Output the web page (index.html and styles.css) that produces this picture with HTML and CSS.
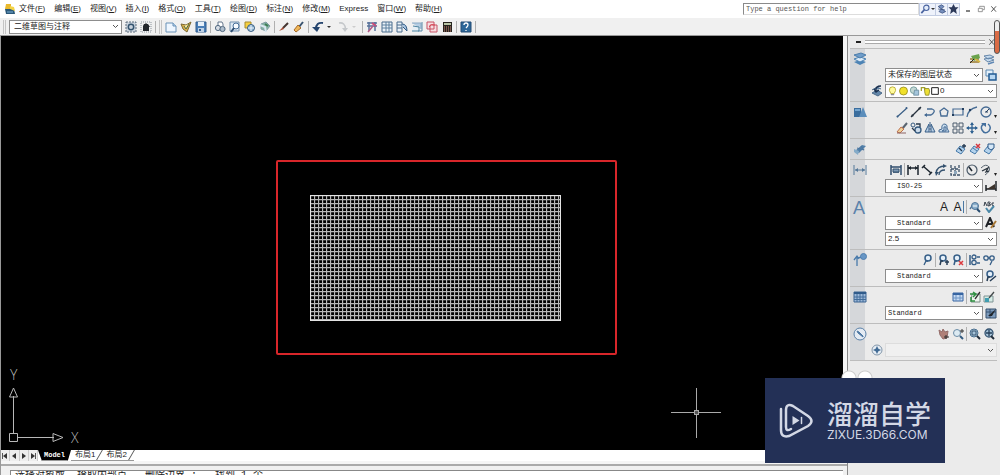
FILE: index.html
```html
<!DOCTYPE html>
<html lang="zh-CN">
<head>
<meta charset="utf-8">
<title>CAD</title>
<link rel="stylesheet" href="styles.css">
</head>
<body>
<svg class="defs" aria-hidden="true">
  <symbol id="app" viewBox="0 0 12 12"><path d="M2 1h5v5H1z" fill="#e9b92c"/><path d="M1 6h9l1 5H2z" fill="#2b5878"/><path d="M6 3l4 1 1 4-5-2z" fill="#f4d447"/><path d="M3 9h6" stroke="#7db0d8"/></symbol>
  <symbol id="gear" viewBox="0 0 12 12"><rect x="1" y="1" width="10" height="10" fill="#c9d2dc" stroke="#5c6c7c" stroke-dasharray="2 1"/><circle cx="6" cy="6" r="2.7" fill="none" stroke="#34546f" stroke-width="1.5"/></symbol>
  <symbol id="home" viewBox="0 0 12 12"><rect x="1" y="1" width="10" height="10" fill="none" stroke="#8b949c" stroke-dasharray="1 1"/><path d="M3 5l1-2h1l1-1 1 1h1l2 3H9v4H3z" fill="#22262b"/></symbol>
  <symbol id="new" viewBox="0 0 12 12"><path d="M1 2h7l3 3v6H1z" fill="#eef6ff" stroke="#6991b7"/><path d="M8 2v3h3" fill="#b8d3ec" stroke="#6991b7"/></symbol>
  <symbol id="open" viewBox="0 0 12 12"><path d="M1 3l5 1 5-3-2 5-2 5-4-3z" fill="#d9b04a" stroke="#7c6a34"/><path d="M4 5l2 3 3-5" fill="#f8e69b" stroke="#4d6a44"/></symbol>
  <symbol id="save" viewBox="0 0 12 12"><path d="M1 1h10v10H1z" fill="#4a7fb8" stroke="#315c8d"/><path d="M3 1h6v4H3z" fill="#e6f0fa"/><path d="M3 7h6v4H3z" fill="#bed1e6"/><path d="M4 8h2v2H4z" fill="#315c8d"/></symbol>
  <symbol id="print" viewBox="0 0 12 12"><path d="M4 5V1h4l1 2v2" fill="#fff" stroke="#64778c"/><circle cx="4" cy="7" r="2.6" fill="#d7dde5" stroke="#51687f"/><circle cx="8.500" cy="8" r="2.600" fill="#aebdcc" stroke="#51687f"/></symbol>
  <symbol id="preview" viewBox="0 0 12 12"><path d="M1 1h9v9H1z" fill="#dfeaf5" stroke="#7291af"/><circle cx="7" cy="5" r="3" fill="#f7fbff" stroke="#476f99"/><path d="M5 7l-3 4" stroke="#2d4d70" stroke-width="2"/></symbol>
  <symbol id="publish" viewBox="0 0 12 12"><path d="M1 1h6v6H1z" fill="#f6cf3e" stroke="#a48a31"/><circle cx="7" cy="7" r="3.500" fill="#8bb0cf" stroke="#3e6283"/><path d="M4 7h6M7 4v6" stroke="#eaf4fc"/></symbol>
  <symbol id="globe" viewBox="0 0 12 12"><path d="M2 3l5-2 4 4-4 5-5-2z" fill="#86b3a4" stroke="#7f9ba3"/><path d="M1 4l5 2 1 5" fill="none" stroke="#d9e7f0" stroke-width="2"/><path d="M6 3l3 2" stroke="#3d7c54" stroke-width="2"/></symbol>
  <symbol id="brush" viewBox="0 0 12 12"><path d="M10 2L5 7" stroke="#443530" stroke-width="2"/><path d="M5 6L1 10l5-2z" fill="#a4472e"/></symbol>
  <symbol id="match" viewBox="0 0 12 12"><path d="M10 1L6 6" stroke="#36506c" stroke-width="2"/><path d="M5 4l3 3-5 4-2-2z" fill="#eeb75a" stroke="#a66a28"/></symbol>
  <symbol id="undo" viewBox="0 0 12 12"><path d="M11 2Q4 1 4 8" fill="none" stroke="#24446e" stroke-width="2"/><path d="M0 6h8l-3 5z" fill="#24446e"/></symbol>
  <symbol id="redo" viewBox="0 0 12 12"><path d="M2 2q6-1 6.500 6" fill="none" stroke="#c5c8cb" stroke-width="1.500"/><path d="M5 7h6l-3 4z" fill="#c5c8cb"/></symbol>
  <symbol id="props" viewBox="0 0 12 12"><path d="M1 2h10M1 5h10M3 1v9M9 1v9" stroke="#58719a" stroke-width="1.500"/><path d="M6 2l4 3" stroke="#cc4d78" stroke-width="2"/><path d="M2 11l5-6" stroke="#b75a85" stroke-width="1.500"/></symbol>
  <symbol id="sheet" viewBox="0 0 12 12"><path d="M1 1h10v10H1z" fill="#e9f1f8" stroke="#486b8c"/><path d="M5 1v10M8 1v10M1 4h10M1 7h10" stroke="#5d809f"/></symbol>
  <symbol id="palette" viewBox="0 0 12 12"><path d="M1 1h5v10H1z" fill="#e9f1f8" stroke="#486b8c"/><path d="M1 4h5M1 7h5" stroke="#486b8c"/><path d="M6 3q5 0 5 7l-4-4" fill="#a9c5e0" stroke="#2f5984"/></symbol>
  <symbol id="stack" viewBox="0 0 12 12"><path d="M1 2h9v6" fill="#b4cde3" stroke="#8ba9c4"/><path d="M2 5l6 1v4H1" fill="#e6eff6" stroke="#4b83a0"/><path d="M11 1v9H7" fill="none" stroke="#5688a9"/></symbol>
  <symbol id="markup" viewBox="0 0 12 12"><path d="M1 1h7v7H1zM4 4h7v7H4z" fill="#f7dce0" stroke="#c65365"/><path d="M3 6q2-4 6-2" fill="none" stroke="#db4a58"/></symbol>
  <symbol id="calc" viewBox="0 0 12 12"><path d="M2 1h9v10H2z" fill="#26241f"/><path d="M3 2h7v2H3z" fill="#b9c5a6"/><path d="M3 6h7M3 8h7M3 10h7" stroke="#d0887a" stroke-dasharray="1 1"/></symbol>
  <symbol id="help" viewBox="0 0 12 12"><path d="M1 1h10v10H1z" fill="#2d6798" stroke="#244d74"/><path d="M4 4q0-2 2-2t2 2q0 1-2 3M6 9v1" fill="none" stroke="#fff" stroke-width="1.300"/></symbol>
  <symbol id="find" viewBox="0 0 12 12"><circle cx="7" cy="4.500" r="3.200" fill="#e3ecfa" stroke="#4a64a0" stroke-width="1.300"/><path d="M4.500 7L1 11" stroke="#4a64a0" stroke-width="2"/></symbol>
  <symbol id="comm" viewBox="0 0 12 12"><path d="M2 3l4-2 3 2-3 3zM3 9l3-3 5 3-4 2z" fill="#7891bf" stroke="#3e5482"/><path d="M2 6l8 1" stroke="#3e5482"/></symbol>
  <symbol id="star" viewBox="0 0 12 12"><path d="M6 0l2 4h4L9 7l1 5-4-3-4 3 1-5-3-3h4z" fill="#2d3a5a"/></symbol>
  <symbol id="min" viewBox="0 0 12 12"><path d="M3 9h6" stroke="#444" stroke-width="2"/></symbol>
  <symbol id="restore" viewBox="0 0 12 12"><path d="M4 4V2h7v5H9M2 5h6v5H2z" fill="none" stroke="#666"/></symbol>
  <symbol id="close" viewBox="0 0 12 12"><path d="M2 2l7 8M9 2l-7 8" stroke="#555" stroke-width="1.500"/></symbol>
  <symbol id="layers" viewBox="0 0 14 14"><path d="M1 10l6 3 6-3-6-2z" fill="#4c83b5"/><path d="M1 7l6 3 6-3-6-2z" fill="#dcebf7" stroke="#4c83b5"/><path d="M1 3l6 3 6-3-5-2z" fill="#6f9dca" stroke="#4c7dac"/></symbol>
  <symbol id="layerp" viewBox="0 0 12 12"><path d="M1 9h9M1 6h9" stroke="#9a7b31" stroke-width="1.500"/><path d="M2 3l8-2 1 4-6 3z" fill="#6aa34d"/><path d="M1 10l4-4" stroke="#222"/><path d="M6 6l5 3" stroke="#d3b441" stroke-width="2"/></symbol>
  <symbol id="layers2" viewBox="0 0 12 12"><path d="M1 3l6-1 4 2-6 2zM1 6l6-1 4 2-6 2z" fill="#c7dbee" stroke="#6687aa"/><path d="M5 11l6-2" stroke="#5f88b5" stroke-width="1.500"/></symbol>
  <symbol id="copyw" viewBox="0 0 12 12"><path d="M1 1h7v6H1z" fill="#e4f0fa" stroke="#5b87af"/><path d="M4 5h7v6H4z" fill="#b7d7f2" stroke="#225b92" stroke-width="1.500"/></symbol>
  <symbol id="laycur" viewBox="0 0 12 12"><path d="M1 8l5-3 5 3-4 3zM1 5l5-3 4 2" fill="#6387aa" stroke="#4d6c8b"/><path d="M10 1q-6 0-5 5M3 4l2 3 3-2" fill="none" stroke="#182d4c" stroke-width="1.300"/></symbol>
  <symbol id="bulb" viewBox="0 0 12 12"><path d="M4 9Q1 5 3 2q3-2 6 0 2 3-1 7z" fill="#fffb9c" stroke="#b5a62e"/><path d="M4 10h4v1H4z" fill="#556"/></symbol>
  <symbol id="sun" viewBox="0 0 12 12"><circle cx="6" cy="6" r="4.800" fill="#f0e02a" stroke="#998d1e"/></symbol>
  <symbol id="freeze" viewBox="0 0 12 12"><circle cx="5" cy="5" r="4" fill="#c4d8d4" stroke="#6e9796"/><path d="M6 5h5v6H5z" fill="#a5c5db" stroke="#698c9f"/></symbol>
  <symbol id="lock" viewBox="0 0 12 12"><path d="M1 6V2h4v3" fill="none" stroke="#a0a12e" stroke-width="1.500"/><path d="M5 3h5l1 3-1 5H6L5 7z" fill="#eee034" stroke="#8e8b26"/></symbol>
  <symbol id="swatch" viewBox="0 0 12 12"><path d="M1 1h10v10H1z" fill="#fff" stroke="#222" stroke-width="1.500"/></symbol>
  <symbol id="shapes" viewBox="0 0 14 14"><path d="M1 3h7v9H1z" fill="#3a6d9e"/><path d="M6 12l4-10 4 10z" fill="#5b8dbb"/><path d="M2 4h5v2H2z" fill="#73a5d0"/></symbol>
  <symbol id="line" viewBox="0 0 12 12"><path d="M1 11l10-9" stroke="#385d85" stroke-width="1.200"/><circle cx="1.500" cy="10.500" r="1" fill="#385d85"/><circle cx="10.500" cy="2" r="1" fill="#385d85"/></symbol>
  <symbol id="xline" viewBox="0 0 12 12"><path d="M1 11l10-10" stroke="#26313d" stroke-width="1.200"/><path d="M8 2l3-1-1 3zM1 11l1-3 2 2z" fill="#26313d"/></symbol>
  <symbol id="pline" viewBox="0 0 12 12"><path d="M3 3h5q3 1 2 3T7 9H1" fill="none" stroke="#466b94" stroke-width="1.300"/><path d="M3 7L0 9l3 2" fill="#466b94"/></symbol>
  <symbol id="poly" viewBox="0 0 12 12"><path d="M6 2l4 3-1 5H3L2 5z" fill="none" stroke="#466b94" stroke-width="1.300"/></symbol>
  <symbol id="rect" viewBox="0 0 12 12"><path d="M1 3h10v6H1z" fill="none" stroke="#466b94" stroke-width="1.200"/><path d="M0 8h2v2H0zM10 2h2v2h-2z" fill="#233e5e"/></symbol>
  <symbol id="arc" viewBox="0 0 12 12"><path d="M1 11Q2 3 11 1" fill="none" stroke="#466b94" stroke-width="1.300"/><circle cx="4" cy="4" r="1.200" fill="#233e5e"/></symbol>
  <symbol id="circle" viewBox="0 0 12 12"><circle cx="6" cy="6" r="5" fill="none" stroke="#466b94" stroke-width="1.300"/><path d="M6 6l3-3M5 6h3" stroke="#233e5e"/></symbol>
  <symbol id="erase" viewBox="0 0 12 12"><path d="M11 1L6 7" stroke="#596470" stroke-width="2"/><path d="M5 5l3 2-4 4-3-1z" fill="#eed198" stroke="#be704e"/><path d="M1 11h9" stroke="#8f6464"/></symbol>
  <symbol id="copy" viewBox="0 0 12 12"><circle cx="3" cy="3" r="2" fill="none" stroke="#34597f"/><circle cx="8" cy="8" r="3" fill="#cddceb" stroke="#34597f" stroke-width="1.300"/><path d="M6 2h4v3M2 6l3 3" fill="none" stroke="#27384c" stroke-width="1.300"/></symbol>
  <symbol id="mirror" viewBox="0 0 12 12"><path d="M5 2v8H1zM7 2v8h4z" fill="#b9cfe5" stroke="#385f88"/><path d="M6 0v12" stroke="#385f88" stroke-dasharray="2 1"/></symbol>
  <symbol id="offset" viewBox="0 0 12 12"><path d="M1 10V8l3-1q-1-5 3-5 3 1 2 4l2 4zM4 9l2-1V5q2-1 2 1v3z" fill="#c8dced" stroke="#466b94"/></symbol>
  <symbol id="array" viewBox="0 0 12 12"><path d="M1 1h4v4H1zM7 1h4v4H7zM1 7h4v4H1zM7 7h4v4H7z" fill="none" stroke="#4a5b6d"/></symbol>
  <symbol id="move" viewBox="0 0 12 12"><path d="M6 1v10M1 6h10" stroke="#2f6191" stroke-width="1.300"/><path d="M4 3l2-3 2 3zM4 9l2 3 2-3zM3 4L0 6l3 2zM9 4l3 2-3 2z" fill="#2f6191"/></symbol>
  <symbol id="rotate" viewBox="0 0 12 12"><path d="M4 2Q0 4 2 8q3 5 7 1 3-4-1-7" fill="none" stroke="#446f9d" stroke-width="1.500"/><path d="M1 1h5v4z" fill="#446f9d"/></symbol>
  <symbol id="block" viewBox="0 0 14 14"><path d="M2 9l7-6 4 1-7 7z" fill="#517fa9"/><path d="M1 7l5 2-1 4-4-3z" fill="#85abc8"/><path d="M4 6l7 2M8 4l3 4" stroke="#4a759f"/></symbol>
  <symbol id="b1" viewBox="0 0 12 12"><path d="M1 8l4-5 5 3-4 5z" fill="#b4d3ed" stroke="#4679a9"/><path d="M4 5l3 3M9 1v4M7 3h4" stroke="#203750" stroke-width="1.300"/></symbol>
  <symbol id="b2" viewBox="0 0 12 12"><path d="M1 8l4-5 5 3-4 5z" fill="#b4d3ed" stroke="#4679a9"/><path d="M4 5l4 3" stroke="#4679a9"/><path d="M7 1l4 4M11 1L7 5" stroke="#d33842" stroke-width="1.500"/></symbol>
  <symbol id="b3" viewBox="0 0 12 12"><path d="M1 8l4-5 5 3-4 5z" fill="#b4d3ed" stroke="#4679a9"/><path d="M5 1h6v4l-3 2-3-2z" fill="#d4e7f7" stroke="#2d5887"/></symbol>
  <symbol id="dim" viewBox="0 0 14 14"><path d="M1 2v10M13 2v10M2 7h10" stroke="#557899"/><path d="M2 7l3-2v4zM12 7L9 5v4z" fill="#557899"/></symbol>
  <symbol id="d1" viewBox="0 0 12 12"><path d="M1 1v10M11 1v10M1 3h10M3 8h6" stroke="#314e6d" stroke-width="1.500"/><path d="M3 5h6v3H3z" fill="#7d99b4" stroke="#314e6d"/></symbol>
  <symbol id="d2" viewBox="0 0 12 12"><path d="M1 1v10M11 1v10M1 4h10" stroke="#1e2730" stroke-width="1.500"/><path d="M1 4l3-2v4zM11 4L8 2v4z" fill="#1e2730"/></symbol>
  <symbol id="d3" viewBox="0 0 12 12"><path d="M2 2l8 7M1 4l3-3M8 11l3-3" stroke="#1e2730" stroke-width="1.500"/></symbol>
  <symbol id="d4" viewBox="0 0 12 12"><path d="M1 9Q2 2 10 2M4 11q0-5 6-5" fill="none" stroke="#34516e" stroke-width="1.300"/><path d="M8 0l4 2-4 2zM0 8h4l-3 4z" fill="#34516e"/></symbol>
  <symbol id="d5" viewBox="0 0 12 12"><path d="M2 1v10h9M6 2v8M10 1v7M2 5h8" fill="none" stroke="#3c5269" stroke-dasharray="3 1" stroke-width="1.300"/><path d="M5 7h3v3H5z" fill="#8fa8bd"/></symbol>
  <symbol id="d6" viewBox="0 0 12 12"><circle cx="6" cy="6" r="5" fill="none" stroke="#4a5968" stroke-width="1.200"/><path d="M6 7L3 3" stroke="#1e2730" stroke-width="1.500"/></symbol>
  <symbol id="d7" viewBox="0 0 12 12"><path d="M1 4q5-5 8-1 2 4-4 8" fill="none" stroke="#56636f"/><path d="M2 7l6-3-2 4 3-1" fill="none" stroke="#29333d" stroke-width="1.300"/></symbol>
  <symbol id="dstyle" viewBox="0 0 12 12"><path d="M1 5v6M11 1v10M1 9h10" stroke="#202428" stroke-width="1.500"/><path d="M2 9l8-5v5z" fill="#3c332c"/></symbol>
  <symbol id="ta" viewBox="0 0 12 12"><path d="M1 8q5-8 8 0" fill="none" stroke="#4f7498" stroke-width="1.500"/><circle cx="6" cy="5" r="3.500" fill="#8bafcc" stroke="#4f7498"/><path d="M8 8l3 3" stroke="#284c6f" stroke-width="2"/><path d="M4 5h4" stroke="#fff"/></symbol>
  <symbol id="abc" viewBox="0 0 12 12"><path d="M1 5l1-4 2 4M5 1v4M5 1q4 0 1 2 4 1-1 2M11 2q-3-1-2 2l2 1" fill="none" stroke="#333d48"/><path d="M3 7l3 4 5-6" fill="none" stroke="#4b88a7" stroke-width="2"/></symbol>
  <symbol id="tstyle" viewBox="0 0 12 12"><path d="M1 10l4-9 4 9M3 7h5" fill="none" stroke="#1f2226" stroke-width="2"/><path d="M6 11l5-7" stroke="#a87937" stroke-width="2"/></symbol>
  <symbol id="leader" viewBox="0 0 14 14"><path d="M4 13V5l5-1M1 7l3-4 2 3" fill="none" stroke="#487aab" stroke-width="1.300"/><circle cx="10.500" cy="3.500" r="3" fill="#6796c5" stroke="#4f7eaf"/></symbol>
  <symbol id="m1" viewBox="0 0 12 12"><circle cx="7" cy="4" r="3" fill="#e5f0fa" stroke="#365e87" stroke-width="1.500"/><path d="M7 7H5l-2 4" fill="none" stroke="#365e87" stroke-width="1.300"/></symbol>
  <symbol id="m2" viewBox="0 0 12 12"><circle cx="5" cy="4" r="3" fill="#e5f0fa" stroke="#365e87" stroke-width="1.500"/><path d="M5 7H3l-1 4M9 6v5M7 8h4" fill="none" stroke="#263d56" stroke-width="1.500"/></symbol>
  <symbol id="m3" viewBox="0 0 12 12"><circle cx="5" cy="4" r="3" fill="#e5f0fa" stroke="#365e87" stroke-width="1.500"/><path d="M5 7H3l-1 4" fill="none" stroke="#365e87" stroke-width="1.500"/><path d="M7 7l4 4M11 7l-4 4" stroke="#dc3c40" stroke-width="1.500"/></symbol>
  <symbol id="m4" viewBox="0 0 12 12"><path d="M1 1v10M8 3h3M8 9h3" stroke="#365e87" stroke-width="1.500"/><circle cx="5" cy="3" r="2" fill="none" stroke="#365e87" stroke-width="1.300"/><circle cx="5" cy="8.500" r="2.200" fill="none" stroke="#365e87" stroke-width="1.300"/></symbol>
  <symbol id="m5" viewBox="0 0 12 12"><circle cx="3" cy="4" r="2.200" fill="none" stroke="#365e87" stroke-width="1.300"/><circle cx="9" cy="4" r="2.200" fill="none" stroke="#365e87" stroke-width="1.300"/><path d="M5 4h2M9 7l-2 4" stroke="#365e87" stroke-width="1.300"/></symbol>
  <symbol id="m6" viewBox="0 0 12 12"><circle cx="5" cy="4" r="3" fill="#e5f0fa" stroke="#365e87" stroke-width="1.500"/><path d="M5 7H3l-1 4M5 11l6-5" fill="none" stroke="#263d56" stroke-width="1.500"/></symbol>
  <symbol id="table" viewBox="0 0 14 14"><path d="M1 2h12v10H1z" fill="#9db9d9" stroke="#3c6592"/><path d="M1 2h12v2H1z" fill="#315c8b"/><path d="M4 4v8M7 4v8M10 4v8M1 7h12M1 9.500h12" stroke="#436d9a"/></symbol>
  <symbol id="t1" viewBox="0 0 12 12"><path d="M1 2h10v8H1z" fill="#c6daf2" stroke="#3765a2"/><path d="M1 2h10v2H1z" fill="#3765a2"/><path d="M4 4v6M8 4v6M1 7h10" stroke="#6d94c4"/></symbol>
  <symbol id="t2" viewBox="0 0 12 12"><path d="M3 3h8v8H2z" fill="#edf5ee" stroke="#7b8b86"/><path d="M1 3h5M4 1l3 2-3 3M2 6v4h4" fill="none" stroke="#2f9142" stroke-width="1.500"/><path d="M6 8l5-7" stroke="#333" stroke-width="1.300"/></symbol>
  <symbol id="t3" viewBox="0 0 12 12"><path d="M1 5h9v6H1z" fill="#d6ece6" stroke="#7e9394"/><path d="M2 7h4v4H2z" fill="#419eb1"/><path d="M6 7l5-6" stroke="#43494a" stroke-width="1.300"/></symbol>
  <symbol id="t4" viewBox="0 0 12 12"><path d="M1 2h10v9H1z" fill="#7c9abb" stroke="#36506e"/><path d="M1 5h10M5 2v9" stroke="#36506e"/><path d="M3 9l8-7-4 7z" fill="#20242a"/></symbol>
  <symbol id="nav" viewBox="0 0 14 14"><circle cx="7" cy="7" r="6" fill="#e4ebf3" stroke="#5b81a8"/><path d="M4 4l2 1 4 4v1L5 6z" fill="#4e79a4" stroke="#4e79a4"/></symbol>
  <symbol id="hand" viewBox="0 0 12 12"><path d="M1 2l3 2 1-3 2 3 3-1-1 7-4 1-3-4z" fill="#b08078" stroke="#946d6a"/><path d="M8 7v4M6 9h5" stroke="#333"/></symbol>
  <symbol id="zoom1" viewBox="0 0 12 12"><circle cx="5" cy="5" r="3.500" fill="#dceaf2" stroke="#6b8ca6"/><path d="M8 8l3 3" stroke="#345c80" stroke-width="2"/><path d="M10 1v4M8 3h4" stroke="#333"/></symbol>
  <symbol id="zoom2" viewBox="0 0 12 12"><circle cx="5" cy="5" r="4" fill="#a7c4d9" stroke="#4c708f"/><path d="M3 3h4v4H3z" fill="none" stroke="#365471"/><path d="M8 8l3 3" stroke="#222e3c" stroke-width="2"/></symbol>
  <symbol id="zoom3" viewBox="0 0 12 12"><circle cx="6" cy="5" r="4" fill="#a7c4d9" stroke="#365471" stroke-width="1.300"/><path d="M3 5h6M6 2v6" stroke="#263f5a" stroke-width="1.300"/><path d="M8 8l3 3" stroke="#222e3c" stroke-width="2"/></symbol>
  <symbol id="target" viewBox="0 0 12 12"><circle cx="6" cy="6" r="5" fill="#e6edf4" stroke="#8397aa"/><path d="M6 2l2 4-2 4-2-4zM2 6l4-2 4 2-4 2z" fill="#416b94"/></symbol>
</svg>

<div class="app">
  <header class="menubar">
    <svg class="icon"><use href="#app"/></svg>
    <nav class="menus">
      <button>文件(<u>F</u>)</button><button>编辑(<u>E</u>)</button><button>视图(<u>V</u>)</button><button>插入(<u>I</u>)</button><button>格式(<u>O</u>)</button><button>工具(<u>T</u>)</button><button>绘图(<u>D</u>)</button><button>标注(<u>N</u>)</button><button>修改(<u>M</u>)</button><button>Express</button><button>窗口(<u>W</u>)</button><button>帮助(<u>H</u>)</button>
    </nav>
    <input class="ask" type="text" aria-label="Help search" placeholder="Type a question for help">
    <div class="search-tools">
      <button class="framed" aria-label="Search"><svg class="icon"><use href="#find"/></svg><i class="caret"></i></button>
      <button class="framed" aria-label="Communication"><svg class="icon"><use href="#comm"/></svg></button>
      <button class="framed" aria-label="Favorites"><svg class="icon"><use href="#star"/></svg></button>
    </div>
    <div class="window-tools">
      <button aria-label="Minimize"><svg class="icon small"><use href="#min"/></svg></button>
      <button aria-label="Restore"><svg class="icon small"><use href="#restore"/></svg></button>
      <button aria-label="Close"><svg class="icon small"><use href="#close"/></svg></button>
    </div>
  </header>

  <div class="toolbar">
    <i class="grip"></i>
    <select class="combo workspace" aria-label="Workspace"><option>二维草图与注释</option></select>
    <button aria-label="Workspace settings"><svg class="icon"><use href="#gear"/></svg></button>
    <button aria-label="My workspace"><svg class="icon"><use href="#home"/></svg></button>
    <i class="sep"></i><i class="grip"></i>
    <button aria-label="New"><svg class="icon"><use href="#new"/></svg></button>
    <button aria-label="Open"><svg class="icon"><use href="#open"/></svg></button>
    <button aria-label="Save"><svg class="icon"><use href="#save"/></svg></button>
    <i class="sep"></i>
    <button aria-label="Print"><svg class="icon"><use href="#print"/></svg></button>
    <button aria-label="Preview"><svg class="icon"><use href="#preview"/></svg></button>
    <button aria-label="Publish"><svg class="icon"><use href="#publish"/></svg></button>
    <button aria-label="3D DWF"><svg class="icon"><use href="#globe"/></svg></button>
    <i class="sep"></i>
    <button aria-label="Match properties"><svg class="icon"><use href="#brush"/></svg></button>
    <button aria-label="Block editor"><svg class="icon"><use href="#match"/></svg></button>
    <i class="sep"></i>
    <button aria-label="Undo"><svg class="icon"><use href="#undo"/></svg><i class="caret spaced"></i></button>
    <button aria-label="Redo"><svg class="icon"><use href="#redo"/></svg><i class="caret spaced off"></i></button>
    <i class="sep"></i>
    <button aria-label="Properties"><svg class="icon"><use href="#props"/></svg></button>
    <button aria-label="Design center"><svg class="icon"><use href="#sheet"/></svg></button>
    <button aria-label="Tool palettes"><svg class="icon"><use href="#palette"/></svg></button>
    <button aria-label="Sheet sets"><svg class="icon"><use href="#stack"/></svg></button>
    <button aria-label="Markup"><svg class="icon"><use href="#markup"/></svg></button>
    <button aria-label="Calculator"><svg class="icon"><use href="#calc"/></svg></button>
    <i class="sep"></i>
    <button aria-label="Help"><svg class="icon"><use href="#help"/></svg></button>
    <i class="sep"></i>
  </div>

  <div class="main">
    <main class="work">
      <div class="canvas">
        <svg class="drawing">
          <defs><pattern id="hatch" x="309" y="159" width="4" height="4" patternUnits="userSpaceOnUse"><path d="M0 .5h4M.5 0v4" stroke="#b8b8b8" stroke-width="1.300"/></pattern></defs>
          <rect x="276" y="125" width="339" height="193" rx="1" fill="none" stroke="#d8262a" stroke-width="2"/>
          <rect x="309" y="159" width="250" height="125" fill="url(#hatch)"/>
          <rect x="309.500" y="159.500" width="250" height="125" fill="none" stroke="#e4e4e4"/>
          <path d="M670 376.500h50M695.500 352v50" stroke="#aaa"/>
          <rect x="693.500" y="374.500" width="4" height="4" fill="#555" stroke="#aaa"/>
        </svg>
        <svg class="ucs" viewBox="0 0 90 90" fill="none" stroke="#b8b8b8">
          <path d="M8.500 73.500h8v8h-8zM12.500 73V36M17 77.500h36M12.500 28l-4 9h8zM62 77.500l-10-4v8z"/>
          <text x="9" y="20">Y</text><text x="70" y="83">X</text>
        </svg>
      </div>
      <div class="tabs">
        <div class="pager"><button aria-label="First"><i class="tri left bar"></i></button><button aria-label="Previous"><i class="tri left"></i></button><button aria-label="Next"><i class="tri"></i></button><button aria-label="Last"><i class="tri bar"></i></button></div>
        <button class="tab active">Model</button><button class="tab">布局1</button><button class="tab">布局2</button>
      </div>
      <div class="command"><div class="history">选择对象或&nbsp; 拾取内部点 &nbsp; 删除边界 : &nbsp; 找到 1 个</div></div>
    </main>

    <aside class="panel">
      <div class="panel-head"><button aria-label="Collapse" class="mark minus"></button><i class="rails"></i><button aria-label="Close panel" class="mark"><svg class="icon small"><use href="#close"/></svg></button></div>

      <section class="group">
        <div class="strip"><svg><use href="#layers"/></svg></div>
        <div class="rows">
          <div class="tools"><button aria-label="Layer properties"><svg class="icon"><use href="#layerp"/></svg></button><button aria-label="Layer states"><svg class="icon"><use href="#layers2"/></svg></button></div>
          <div class="field"><select class="combo" aria-label="Layer state"><option>未保存的图层状态</option></select><button aria-label="Layer previous"><svg class="icon"><use href="#copyw"/></svg></button></div>
          <div class="field wide"><button aria-label="Make current"><svg class="icon"><use href="#laycur"/></svg></button>
            <div class="layer"><select class="combo" aria-label="Layer"><option>0</option></select><span class="flags"><svg><use href="#bulb"/></svg><svg><use href="#sun"/></svg><svg><use href="#freeze"/></svg><svg><use href="#lock"/></svg><svg class="sw"><use href="#swatch"/></svg></span></div></div>
        </div>
      </section>

      <section class="group">
        <div class="strip"><svg><use href="#shapes"/></svg></div>
        <div class="rows">
          <div class="tools more"><button aria-label="Line"><svg class="icon"><use href="#line"/></svg></button><button aria-label="Ray"><svg class="icon"><use href="#xline"/></svg></button><button aria-label="Polyline"><svg class="icon"><use href="#pline"/></svg></button><button aria-label="Polygon"><svg class="icon"><use href="#poly"/></svg></button><button aria-label="Rectangle"><svg class="icon"><use href="#rect"/></svg></button><button aria-label="Arc"><svg class="icon"><use href="#arc"/></svg></button><button aria-label="Circle"><svg class="icon"><use href="#circle"/></svg></button></div>
          <div class="tools more"><button aria-label="Erase"><svg class="icon"><use href="#erase"/></svg></button><button aria-label="Copy"><svg class="icon"><use href="#copy"/></svg></button><button aria-label="Mirror"><svg class="icon"><use href="#mirror"/></svg></button><button aria-label="Offset"><svg class="icon"><use href="#offset"/></svg></button><button aria-label="Array"><svg class="icon"><use href="#array"/></svg></button><button aria-label="Move"><svg class="icon"><use href="#move"/></svg></button><button aria-label="Rotate"><svg class="icon"><use href="#rotate"/></svg></button></div>
        </div>
      </section>

      <section class="group">
        <div class="strip"><svg><use href="#block"/></svg></div>
        <div class="rows"><div class="tools"><button aria-label="Add scale"><svg class="icon"><use href="#b1"/></svg></button><button aria-label="Delete scale"><svg class="icon"><use href="#b2"/></svg></button><button aria-label="Scale list"><svg class="icon"><use href="#b3"/></svg></button></div></div>
      </section>

      <section class="group">
        <div class="strip"><svg><use href="#dim"/></svg></div>
        <div class="rows">
          <div class="tools more"><button aria-label="Quick dimension"><svg class="icon"><use href="#d1"/></svg></button><i class="sep"></i><button aria-label="Linear"><svg class="icon"><use href="#d2"/></svg></button><button aria-label="Aligned"><svg class="icon"><use href="#d3"/></svg></button><button aria-label="Arc length"><svg class="icon"><use href="#d4"/></svg></button><button aria-label="Ordinate"><svg class="icon"><use href="#d5"/></svg></button><i class="sep"></i><button aria-label="Radius"><svg class="icon"><use href="#d6"/></svg></button><button aria-label="Jogged"><svg class="icon"><use href="#d7"/></svg></button></div>
          <div class="field"><select class="combo mono inset" aria-label="Dimension style"><option>ISO-25</option></select><button aria-label="Dimension styles"><svg class="icon"><use href="#dstyle"/></svg></button></div>
        </div>
      </section>

      <section class="group">
        <div class="strip"><span class="big-a">A</span></div>
        <div class="rows">
          <div class="tools"><button class="glyph">A</button><button class="glyph cursor">A</button><i class="sep"></i><button aria-label="Find text"><svg class="icon"><use href="#ta"/></svg></button><button aria-label="Spelling"><svg class="icon"><use href="#abc"/></svg></button></div>
          <div class="field"><select class="combo mono inset" aria-label="Text style"><option>Standard</option></select><button aria-label="Text styles"><svg class="icon"><use href="#tstyle"/></svg></button></div>
          <div class="field wide"><select class="combo" aria-label="Text height"><option>2.5</option></select></div>
        </div>
      </section>

      <section class="group">
        <div class="strip"><svg><use href="#leader"/></svg></div>
        <div class="rows">
          <div class="tools"><button aria-label="Multileader"><svg class="icon"><use href="#m1"/></svg></button><i class="sep"></i><button aria-label="Add leader"><svg class="icon"><use href="#m2"/></svg></button><button aria-label="Remove leader"><svg class="icon"><use href="#m3"/></svg></button><i class="sep"></i><button aria-label="Align leaders"><svg class="icon"><use href="#m4"/></svg></button><button aria-label="Collect leaders"><svg class="icon"><use href="#m5"/></svg></button></div>
          <div class="field"><select class="combo mono inset" aria-label="Leader style"><option>Standard</option></select><button aria-label="Leader styles"><svg class="icon"><use href="#m6"/></svg></button></div>
        </div>
      </section>

      <section class="group">
        <div class="strip"><svg><use href="#table"/></svg></div>
        <div class="rows">
          <div class="tools"><button aria-label="Table"><svg class="icon"><use href="#t1"/></svg></button><i class="sep"></i><button aria-label="Update link"><svg class="icon"><use href="#t2"/></svg></button><button aria-label="Extract data"><svg class="icon"><use href="#t3"/></svg></button></div>
          <div class="field"><select class="combo mono" aria-label="Table style"><option>Standard</option></select><button aria-label="Table styles"><svg class="icon"><use href="#t4"/></svg></button></div>
        </div>
      </section>

      <section class="group">
        <div class="strip"><svg><use href="#nav"/></svg></div>
        <div class="rows">
          <div class="tools"><button aria-label="Pan"><svg class="icon"><use href="#hand"/></svg></button><button aria-label="Realtime zoom"><svg class="icon"><use href="#zoom1"/></svg></button><i class="sep"></i><button aria-label="Zoom window"><svg class="icon"><use href="#zoom2"/></svg></button><button aria-label="Zoom extents"><svg class="icon"><use href="#zoom3"/></svg></button></div>
          <div class="field wide"><button aria-label="View"><svg class="icon"><use href="#target"/></svg></button><select class="combo" aria-label="Saved view" disabled><option></option></select></div>
        </div>
      </section>
    </aside>
  </div>

  <i class="scroll-thumb"></i>
  <div class="brand">
    <i class="bubbles"></i>
    <svg class="brand-logo" viewBox="0 0 36 36" fill="none" stroke="#d3d8e5" stroke-width="2.500" stroke-linecap="round"><path d="M2 6v21q0 8 8 6l19-10q7-5 0-10L14 3Q7 0 7 7v17q0 5 5 2"/><path d="M13.500 13v9l7-4.500z" fill="#d3d8e5" stroke="none"/><path d="M22.500 14.500v6" stroke-width="1.500"/></svg>
    <div class="brand-text"><strong>溜溜自学</strong><span>ZIXUE.3D66.COM</span></div>
  </div>
</div>
</body>
</html>
```

FILE: styles.css
```css
* { box-sizing: border-box; }
body {
  margin: 0;
  font: 8px/12px "Liberation Sans", "Noto Sans CJK SC", sans-serif;
  color: #222;
  background: #ebebeb;
}
button { padding: 0; border: 0; background: none; color: inherit; font: inherit; display: flex; align-items: center; }
.defs { position: absolute; width: 0; height: 0; }
.app { position: relative; display: flex; flex-direction: column; height: 100vh; overflow: hidden; }
.icon { display: block; flex: none; width: 12px; height: 12px; }
.icon.small { width: 8px; height: 8px; }

.menubar { display: flex; align-items: center; height: 18px; padding: 0 2px 0 4px; background: #fff; }
.menus { display: flex; gap: 9px; margin-left: 3px; white-space: nowrap; }
.menus u { text-underline-offset: 1px; }
.ask {
  width: 176px; height: 12px; margin-left: auto; padding: 0 2px;
  border: 1px solid #8a8a8a; border-right-color: #ddd; border-bottom-color: #ddd;
  background: #fff; font: 7px/10px "Liberation Mono", monospace;
}
.ask::placeholder { color: #555; opacity: 1; }
.search-tools { display: flex; }
.framed { height: 13px; border: 1px solid #c2cce2; background: #eef2fb; }
.framed .icon { width: 11px; height: 10px; }
.framed + .framed { border-left: 0; }
.window-tools { display: flex; gap: 5px; margin-left: 4px; }
.caret { border: 2px solid transparent; border-top-color: #333; border-bottom: 0; }
.caret.spaced { margin: 0 3px; }
.caret.off { border-top-color: #ccc; }

.toolbar { display: flex; align-items: center; gap: 3px; height: 18px; padding-left: 3px; background: #f0f0f0; border-bottom: 1px solid #999; }
.grip { width: 3px; height: 14px; border: solid #c4c4c4; border-width: 0 1px; }
.sep { flex: none; width: 1px; height: 12px; background: #b0b0b0; }

.combo {
  appearance: none; flex: 1; min-width: 0; height: 14px; margin: 0; padding: 0 14px 0 2px;
  border: 1px solid #8d8d8d; border-radius: 0; color: #222;
  background: #fff url("data:image/svg+xml,%3Csvg xmlns='http://www.w3.org/2000/svg' width='7' height='5'%3E%3Cpath d='M1 1l2.500 2.500L6 1' fill='none' stroke='%23555'/%3E%3C/svg%3E") no-repeat right 2px center;
  font: 8px/12px "Liberation Sans", "Noto Sans CJK SC", sans-serif;
}
.combo.mono { font-family: "Liberation Mono", monospace; font-size: 7px; }
.combo.inset { padding-left: 11px; }
.combo:disabled { border-color: #ddd; background-color: #f0f0f0; opacity: 1; }
.workspace { flex: none; width: 113px; padding-left: 4px; }

.main { display: flex; flex: 1; min-height: 0; }
.work { display: flex; flex: 1; flex-direction: column; min-width: 0; border-left: 1px solid #999; background: #f5f5f5; }
.canvas { position: relative; flex: 1; min-height: 0; margin-right: 4px; background: #000; }
.drawing { position: absolute; inset: 0; width: 100%; height: 100%; }
.ucs { position: absolute; left: 0; bottom: 0; width: 90px; height: 90px; }
.ucs text { fill: #b8b8b8; stroke: none; font: 300 14px "Open Sans", sans-serif; }

.tabs { display: flex; align-items: stretch; height: 11px; background: #fff; }
.pager { display: flex; width: 37px; }
.pager button { flex: 1; justify-content: center; border-right: 1px solid #ccc; background: #eee; }
.tri { border: solid transparent; border-width: 3px 0 3px 4px; border-left-color: #333; }
.tri.left { border-width: 3px 4px 3px 0; border-color: transparent #333 transparent transparent; }
.tri.bar { box-shadow: 1px 0 #555; }
.tri.left.bar { box-shadow: -1px 0 #555; }
.tab { padding: 0 0 0 4px; font-size: 8px; line-height: 10px; border-bottom: 1px solid #999; background: #fff; }
.tab:not(.active)::after { content: ""; width: 1px; height: 10px; margin: 0 2px 0 4px; background: #555; transform: skewX(-30deg); }
.tab.active { padding: 0 6px; color: #fff; background: #000; font: bold 7px/10px "Liberation Mono", monospace; clip-path: polygon(0 0, 100% 0, 90% 100%, 12% 100%); }
.command { height: 11px; margin-top: 3px; padding: 4px 4px 0 9px; border-top: 2px solid #aaa; background: #f0f0f0; }
.history { height: 5px; overflow: hidden; padding-left: 4px; border: solid #888; border-width: 1px 0 0 1px; background: #fff; font: 10px/10px "Liberation Mono", "Noto Sans CJK SC", monospace; white-space: nowrap; }

.panel { flex: none; width: 153px; padding: 0 3px 0 2px; border-left: 1px solid #888; background: #ebebeb; }
.panel-head { display: flex; align-items: center; gap: 3px; height: 12px; padding: 0 1px 0 4px; }
.mark { justify-content: center; width: 8px; height: 8px; }
.minus::before { content: ""; width: 5px; height: 2px; background: #222; }
.rails { flex: 1; height: 4px; border: solid #aaa; border-width: 1px 0; background: #fff; }
.group { display: flex; border-top: 1px solid #bdbdbd; }
.group:last-child { border-bottom: 1px solid #bdbdbd; }
.strip { width: 15px; padding: 3px 0 0 3px; background: #d5d7da; }
.strip svg { display: block; width: 14px; height: 14px; }
.big-a { display: block; color: #5b82ab; font: 18px/16px "Liberation Sans", sans-serif; }
.rows { display: flex; flex: 1; flex-direction: column; gap: 2px; min-width: 0; padding: 3px 0; }
.tools { display: flex; align-items: center; justify-content: flex-end; gap: 2px; height: 14px; padding-right: 2px; }
.tools.more { padding-right: 0; }
.tools.more::after { content: ""; width: 3px; height: 3px; margin-top: 9px; background: #222; clip-path: polygon(0 0, 100% 0, 50% 100%); }
.tools .sep { height: 14px; }
.glyph { justify-content: center; width: 12px; font: 12px/12px "Liberation Sans", sans-serif; }
.cursor { border-right: 1px solid #4c78a2; }
.field { display: flex; align-items: center; gap: 2px; padding-left: 20px; }
.field > button { width: 12px; }
.wide { padding-left: 6px; }
.wide > .combo:only-child { margin-left: 14px; }
.layer { position: relative; display: flex; flex: 1; }
.layer .combo { padding-left: 54px; }
.flags { position: absolute; left: 2px; top: 2px; display: flex; align-items: center; pointer-events: none; }
.flags svg { width: 11px; height: 10px; }
.flags .sw { width: 8px; height: 8px; }

.scroll-thumb { position: absolute; top: 20px; right: 0; width: 6px; height: 34px; border: 1px solid #555; border-radius: 3px; background: linear-gradient(#eee 30%, #d96b45 30%); }
.brand { position: absolute; right: 55px; bottom: 12px; display: flex; align-items: center; gap: 12px; width: 180px; height: 85px; padding-left: 14px; background: #233056; color: #d3d8e5; }
.brand-logo { width: 36px; height: 36px; }
.brand-text { display: flex; flex-direction: column; white-space: nowrap; }
.brand-text strong { font: 500 26px/26px "Noto Sans CJK SC", sans-serif; }
.brand-text span { margin-top: 3px; font: 12px/12px "Inter", sans-serif; }
.bubbles { position: absolute; top: -9px; left: 76px; width: 32px; height: 9px; background: radial-gradient(circle at 8px 9px, #fff 6px, #ccc 7px, transparent 8px), radial-gradient(circle at 24px 9px, #fff 6px, #ccc 7px, transparent 8px); }
```
